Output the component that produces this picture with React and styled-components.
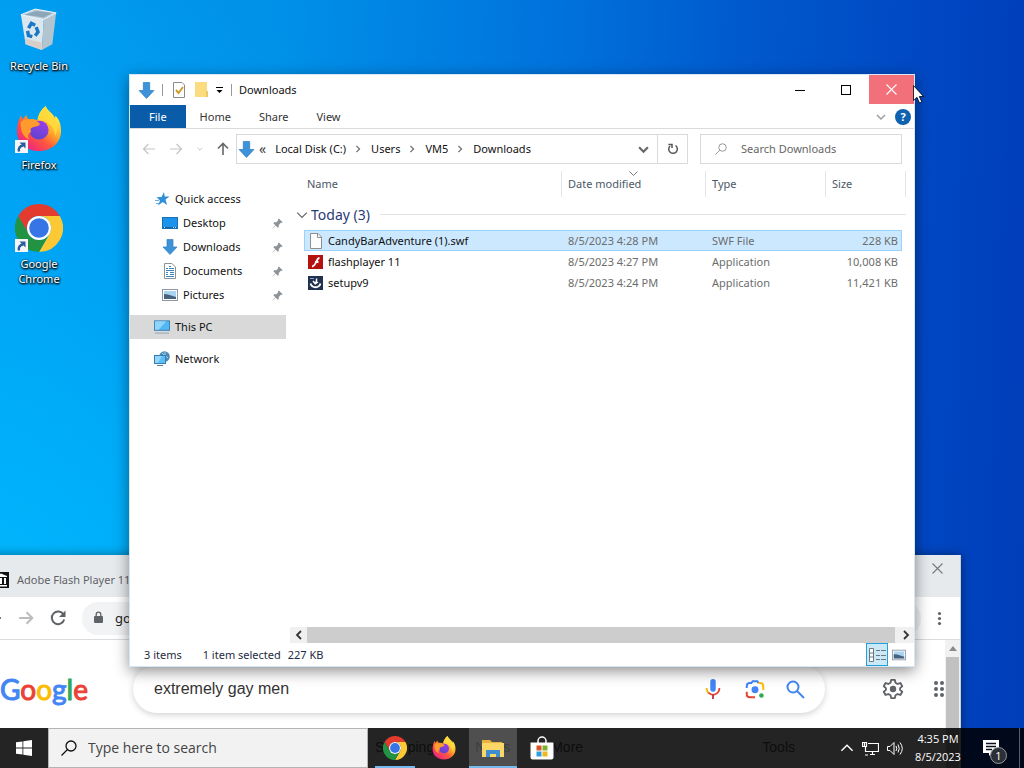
import React, { useId } from 'react';
import styled, { createGlobalStyle, css } from 'styled-components';

const GlobalStyle = createGlobalStyle`
  * { box-sizing: border-box; }
  body {
    margin: 0;
    overflow: hidden;
    font-family: "Noto Sans", "Open Sans", sans-serif;
    font-size: 11px;
    line-height: 16px;
    color: #111;
  }
  button, input {
    font: inherit;
    color: inherit;
    border: 0;
    padding: 0;
    margin: 0;
    background: none;
    outline: none;
  }
  svg { display: block; flex: none; }
`

/* ---------- desktop ---------- */

const Desktop = styled.div`
  position: relative;
  height: 100vh;
  overflow: hidden;
  background:
    radial-gradient(ellipse 60% 95% at 0% 88%, rgba(0, 190, 255, 0.9), rgba(0, 180, 255, 0.5) 50%, rgba(0, 170, 255, 0)),
    linear-gradient(92deg, #009cf0 0%, #008fe8 28%, #0074dc 52%, #0058cc 72%, #0046c2 90%, #003cb8 100%);
`

const Shortcuts = styled.nav`
  display: flex;
  flex-direction: column;
  width: 78px;
  padding-top: 6px;
`

const Shortcut = styled.button`
  display: flex;
  flex-direction: column;
  align-items: center;
  height: 99px;
  gap: 4px;
  color: #fff;
  line-height: 15px;
  text-shadow: 0 1px 2px #000, 1px 1px 2px #000, 0 0 2px rgba(0, 0, 0, 0.6);
`

const ShortcutIcon = styled.span`
  position: relative;
  display: grid;
  place-items: center;
  height: 48px;
  width: 48px;
`

const ShortcutArrow = styled.svg`
  position: absolute;
  left: 0;
  bottom: 0;
`

const ShortcutLabel = styled.span`
  width: 66px;
`

const Cursor = styled.svg`
  position: absolute;
  top: 85px;
  right: 100px;
`

/* ---------- explorer window ---------- */

const Explorer = styled.section`
  position: absolute;
  top: 74px;
  left: 129px;
  right: 109px;
  bottom: 101px;
  display: flex;
  flex-direction: column;
  background: #fff;
  border: 1px solid #d5e6f5;
  box-shadow: 0 4px 14px rgba(0, 0, 0, 0.45);
`

const TitleBar = styled.header`
  display: flex;
  align-items: center;
  height: 30px;
  padding-left: 8px;
`

const Divider = styled.span`
  width: 1px;
  height: 12px;
  background: #999;
`

const QuickTools = styled.div`
  display: flex;
  align-items: center;
  gap: 7px;
`

const IconButton = styled.button`
  display: grid;
  place-items: center;
`

const Title = styled.h1`
  flex: 1;
  margin: 0 0 0 7px;
  font-size: 11px;
  font-weight: 400;
`

const WindowButton = styled.button`
  display: grid;
  place-items: center;
  width: ${props => props.$close ? 45 : 46}px;
  height: 29px;
  align-self: flex-start;
  background: ${props => props.$close ? '#f1707a' : 'none'};
  color: ${props => props.$close ? '#fff' : '#000'};
`

const Ribbon = styled.nav`
  display: flex;
  align-items: center;
  height: 24px;
  border-bottom: 1px solid #dadbdc;
  padding-right: 3px;
`

const RibbonTab = styled.button`
  height: 23px;
  padding: 0 ${props => props.$file ? 19 : 14}px;
  color: ${props => props.$file ? '#fff' : '#333'};
  background: ${props => props.$file ? '#0a5ca8' : 'none'};
`

const Spacer = styled.span`
  flex: 1;
`

const Help = styled.button`
  width: 16px;
  height: 16px;
  margin-left: 9px;
  border-radius: 50%;
  background: #0f62b0;
  color: #fff;
  font-weight: 700;
`

const NavBar = styled.div`
  display: flex;
  align-items: center;
  height: 42px;
  padding: 0 12px 2px;
`

const NavButtons = styled.div`
  display: flex;
  align-items: center;
  justify-content: space-between;
  width: 88px;
  margin-right: 6px;
`

const AddressBar = styled.div`
  flex: 1;
  display: flex;
  align-items: center;
  height: 30px;
  border: 1px solid #d9d9d9;
  padding-left: 1px;
`

const Crumb = styled.button`
  margin-left: 9px;
  margin-right: 8px;
`

const CrumbOverflow = styled.button`
  margin-left: 4px;
  font-size: 14px;
  color: #444;
`

const Reload = styled.button`
  display: grid;
  place-items: center;
  width: 30px;
  height: 28px;
  margin-left: 8px;
  border-left: 1px solid #d9d9d9;
`

const SearchBox = styled.label`
  display: flex;
  align-items: center;
  width: 202px;
  height: 30px;
  margin-left: 12px;
  padding-left: 14px;
  gap: 14px;
  border: 1px solid #d9d9d9;

  input {
    flex: 1;
    min-width: 0;
  }
  input::placeholder {
    color: #666;
    opacity: 1;
  }
`

const Body = styled.div`
  flex: 1;
  display: flex;
  min-height: 0;
`

const Sidebar = styled.nav`
  display: flex;
  flex-direction: column;
  width: 156px;
  padding-top: 16px;
`

const SideItem = styled.button`
  display: flex;
  align-items: center;
  gap: 5px;
  height: 24px;
  padding-left: ${props => props.$nested ? 32 : 24}px;
  padding-right: 3px;
  margin-top: ${props => props.$spaced ? 8 : 0}px;
  background: ${props => props.$active ? '#d9d9d9' : 'none'};
  text-align: left;

  span { flex: 1; }
`

const Content = styled.main`
  flex: 1;
  min-width: 0;
  display: flex;
  flex-direction: column;
  padding-left: 4px;
`

const Files = styled.div`
  flex: 1;
  padding: 0 8px 0 14px;
`

const FileTable = styled.table`
  width: 100%;
  table-layout: fixed;
  border-collapse: separate;
  border-spacing: 0;

  th, td {
    padding: 0 4px 0 6px;
    text-align: left;
    font-weight: 400;
    white-space: nowrap;
  }
`

const Column = styled.th`
  position: relative;
  width: ${props => props.$width ? `${props.$width}px` : 'auto'};
  height: 26px;
  color: #4c5866;
  border-right: 1px solid ${props => props.$open ? 'transparent' : '#e5e5e5'};

  &:first-child { padding-left: 3px; }
`

const EdgeColumn = styled.td`
  width: 4px;
  border-right: 1px solid #e5e5e5;

  && { padding: 0; }
`

const SortMark = styled.svg`
  position: absolute;
  top: 0;
  left: 67px;
`

const GroupHeading = styled.button`
  display: flex;
  align-items: center;
  width: calc(100% + 8px);
  height: 33px;
  margin-left: -8px;
  padding-top: 2px;
  gap: 3px;
  font-size: 14px;
  line-height: 20px;
  color: #2b3a78;

  &::after {
    content: "";
    flex: 1;
    height: 1px;
    margin-left: 7px;
    background: #e2e2e2;
  }
`

const GroupCell = styled.td`
  && { padding: 0; }
`

const FileRow = styled.tr`
  td {
    height: 21px;
    color: #6d6d6d;
  }
  td:first-child {
    padding-left: 4px;
    color: #111;
  }
  td:nth-child(4) { text-align: right; }
  td:last-child { padding: 0; }

  ${props => props.$selected && css`
    td:not(:last-child) {
      background: #cce8ff;
      border-top: 1px solid #99d1ff;
      border-bottom: 1px solid #99d1ff;
    }
    td:first-child {
      border-left: 1px solid #99d1ff;
      padding-left: 3px;
    }
    td:nth-child(4) {
      border-right: 1px solid #99d1ff;
      padding-right: 3px;
    }
  `}
`

const FileName = styled.span`
  display: flex;
  align-items: center;
  gap: 4px;
`

const ScrollBar = styled.div`
  display: flex;
  height: 16px;
  background: #f0f0f0;
`

const ScrollButton = styled.button`
  display: grid;
  place-items: center;
  width: 17px;
`

const ScrollThumb = styled.span`
  flex: 1;
  margin-right: 2px;
  background: #cdcdcd;
`

const StatusBar = styled.footer`
  display: flex;
  align-items: center;
  height: 23px;
  padding: 0 4px 0 14px;
  color: #1e2a40;
`

const StatusText = styled.span`
  margin-right: ${props => props.$gap}px;
`

const ViewButton = styled.button`
  display: grid;
  place-items: center;
  width: 22px;
  height: 23px;
  border: 1px solid ${props => props.$active ? '#26a0da' : 'transparent'};
  background: ${props => props.$active ? '#cbe8f6' : 'none'};
`

/* ---------- browser window ---------- */

const Browser = styled.section`
  position: absolute;
  top: 555px;
  left: -40px;
  right: 63px;
  bottom: 0;
  display: flex;
  flex-direction: column;
  background: #fff;
  border-right: 1px solid #c9ccd1;
  box-shadow: 0 0 10px rgba(0, 0, 0, 0.4);
`

const TabStrip = styled.div`
  display: flex;
  align-items: center;
  height: 42px;
  padding: 8px 17px 0 33px;
  gap: 8px;
  background: #e7eaed;
  color: #5f6368;

  button:last-child { align-self: flex-start; }
`

const Toolbar = styled.div`
  display: flex;
  align-items: center;
  height: 43px;
  padding: 0 18px 0 26px;
  gap: 16px;
  border-bottom: 1px solid #dadce0;
`

const Omnibox = styled.label`
  flex: 1;
  display: flex;
  align-items: center;
  height: 33px;
  padding-left: 11px;
  gap: 11px;
  border-radius: 16px;
  background: #f1f3f4;
  color: #202124;
  font-size: 13px;

  input { flex: 1; }
`

const Page = styled.div`
  flex: 1;
  display: flex;
  min-height: 0;
`

const PageContent = styled.div`
  flex: 1;
  min-width: 0;
  overflow: hidden;
  font-family: "Liberation Sans", Arial, sans-serif;
`

const SearchHeader = styled.div`
  display: flex;
  align-items: center;
  height: 74px;
  padding: 24px 0 0 40px;
`

const Logo = styled.a`
  width: 133px;
  font-family: Lato, sans-serif;
  font-size: 28px;
  line-height: 40px;
  text-decoration: none;
  -webkit-text-stroke: 1px;
`

const LogoLetter = styled.span`
  color: ${props => props.$color};
`

const QueryBox = styled.form`
  flex: 1;
  display: flex;
  align-items: center;
  height: 48px;
  padding: 0 20px 0 21px;
  gap: 20px;
  border-radius: 24px;
  box-shadow: 0 2px 6px rgba(32, 33, 36, 0.2);
  color: #333;
  font-size: 16px;

  input {
    flex: 1;
    min-width: 0;
  }
`

const HeaderTools = styled.div`
  display: flex;
  align-items: center;
  justify-content: space-between;
  width: 63px;
  margin-left: 57px;
  overflow: hidden;
`

const Filters = styled.nav`
  display: flex;
  height: 68px;
  padding: 23px 150px 0 415px;
  gap: 41px;
  color: #5f6368;
  font-size: 14px;
  line-height: 20px;

  button { height: 20px; }
  button:last-child { margin-left: auto; }
`

const PageScroll = styled.div`
  width: 15px;
  padding: 0 1px;
  display: flex;
  flex-direction: column;
  align-items: center;
  background: #f1f1f1;

  svg { margin: 6px 0; }
`

const PageThumb = styled.span`
  flex: 1;
  align-self: stretch;
  background: #c1c1c1;
`

/* ---------- taskbar ---------- */

const Taskbar = styled.footer`
  position: absolute;
  left: 0;
  right: 0;
  bottom: 0;
  display: flex;
  height: 40px;
  background: rgba(0, 0, 0, 0.86);
  color: #fff;
  font-family: "Open Sans", "Noto Sans", sans-serif;
`

const StartButton = styled.button`
  display: grid;
  place-items: center;
  width: 48px;
`

const TaskSearch = styled.label`
  display: flex;
  align-items: center;
  width: 320px;
  margin-right: 3px;
  padding-left: 12px;
  gap: 11px;
  background: #f2f2f2;
  border: 1px solid #b4b4b4;
  color: #111;
  font-size: 14px;
  line-height: 20px;

  input { flex: 1; }
  input::placeholder {
    color: #444;
    opacity: 1;
  }
`

const TaskButton = styled.button`
  display: grid;
  place-items: center;
  width: 48px;
  margin-right: 1px;
  background:
    linear-gradient(#76b9ed, #76b9ed) bottom / ${props => props.$active ? '100%' : props.$running ? '40px' : '0'} 2px no-repeat,
    ${props => props.$active ? 'rgba(255, 255, 255, 0.2)' : 'transparent'};
`

const Tray = styled.div`
  display: flex;
  align-items: center;
  gap: 8px;
  margin-left: auto;
`

const Clock = styled.time`
  width: 52px;
  text-align: center;
  line-height: 18px;
`

const ActionCenter = styled.button`
  position: relative;
  display: grid;
  place-items: center;
  width: 48px;
  height: 40px;
  padding-right: 10px;
  border-right: 1px solid #55606e;
  margin-right: 4px;
`

const Badge = styled.span`
  position: absolute;
  left: 18px;
  top: 19px;
  width: 17px;
  height: 17px;
  border: 1px solid #999;
  border-radius: 50%;
  background: #2b2f38;
  line-height: 15px;
`

/* ---------- drawings ---------- */

const ChromeIcon = ({ size }) => (
  <svg width={size} height={size} viewBox="0 0 48 48">
    <path fill="#e33b2e" d="M24 12H44.8A24 24 0 0 0 3.2 12L13.6 30A12 12 0 0 1 24 12Z" />
    <path fill="#fcc934" d="M24 12H44.8A24 24 0 0 1 24 48L34.4 30A12 12 0 0 0 24 12Z" />
    <path fill="#229342" d="M3.2 12L13.6 30A12 12 0 0 0 34.4 30L24 48A24 24 0 0 1 3.2 12Z" />
    <circle cx="24" cy="24" r="12" fill="#fff" />
    <circle cx="24" cy="24" r="9.8" fill="#3575e6" />
  </svg>
)

const FirefoxIcon = ({ size }) => {
  const id = useId()
  return (
    <svg width={size} height={size} viewBox="0 0 48 48">
      <defs>
        <linearGradient id={`${id}f`} x1="0.85" y1="0.1" x2="0.2" y2="0.9">
          <stop offset="0.1" stopColor="#ffe846" />
          <stop offset="0.4" stopColor="#ffa92a" />
          <stop offset="0.65" stopColor="#ff5a3c" />
          <stop offset="1" stopColor="#f0267c" />
        </linearGradient>
        <linearGradient id={`${id}p`} x1="0.8" y1="0" x2="0.3" y2="1">
          <stop offset="0" stopColor="#a13bea" />
          <stop offset="1" stopColor="#5a46cf" />
        </linearGradient>
      </defs>
      <path
        fill={`url(#${id}f)`}
        d="M31 0c1 4 5 6 8 10 1 2 1 3 1 4 1-1 1-2 1-4 4 4 6 9 6 16 0 12-10 21-23 21S1 38 1 26c0-5 1-10 4-16l2 4c1-2 2-3 4-5 0 3 1 4 3 5 3-1 6 0 8 1 1-6 4-11 9-15Z"
      />
      <circle cx="24" cy="25" r="10" fill={`url(#${id}p)`} />
      <path fill="#ff9a2c" d="M5 17c3-3 6-4 9-3 4 0 9 1 11 5-2 3-6 2-9 4-1 1-1 3 0 4-4 1-4 5-2 8-6-2-10-9-9-18Z" />
      <path fill="#ffdb3c" d="M31 0c1 4 5 6 8 10 5 6 6 14 2 21-1-6-3-11-9-14-3-2-6-2-9-2 0-6 3-11 8-15Z" opacity="0.85" />
    </svg>
  )
}

const RecycleIcon = () => (
  <svg width="40" height="44" viewBox="0 0 42 46">
    <path fill="#b9cbd8" d="M2 7L17 1L39 5L26 12Z" />
    <path fill="#8ba6b8" d="M6 7L18 3L35 5L26 10Z" />
    <path fill="#dce6ed" d="M2 7L26 12L24 44L7 38Z" />
    <path fill="#b3c4d1" d="M26 12L39 5L35 38L24 44Z" />
    <path fill="#d8cfcb" d="M6 32L24 36L24 44L7 38Z" />
    <path fill="none" stroke="#eff7fb" d="M2 7L17 1L39 5L26 12Z" />
    <g fill="none" stroke="#1977c8" strokeWidth="3.6">
      <path d="M10 21l3-5 4 2" />
      <path d="M18 20l2 5-3 4" />
      <path d="M14 30l-4-1-1-5" />
    </g>
  </svg>
)

const Down = ({ size = 16 }) => (
  <svg width={size} height={size} viewBox="0 0 16 16">
    <path fill="#3d92d8" stroke="#2f7fc6" strokeWidth="0.7" d="M5 0.500H11V8H15L8 15.500L1 8H5Z" />
  </svg>
)

const Chevron = ({ dir = 'down', size = 8, color = '#666', stroke = 1.4 }) => {
  const points = {
    down: '1,3 5,7 9,3',
    up: '1,7 5,3 9,7',
    left: '7,1 3,5 7,9',
    right: '3,1 7,5 3,9',
  }
  return (
    <svg width={size} height={size} viewBox="0 0 10 10" fill="none" stroke={color} strokeWidth={stroke}>
      <polyline points={points[dir]} />
    </svg>
  )
}

const Arrow = ({ angle = 0, size = 14, color, stroke = 1.2 }) => (
  <svg width={size} height={size} viewBox="0 0 14 14" fill="none" stroke={color} strokeWidth={stroke}>
    <path transform={`rotate(${angle} 7 7)`} d="M13 7H1.500M6.500 2L1.500 7L6.500 12" />
  </svg>
)

const Cross = ({ size = 11, color = '#fff' }) => (
  <svg width={size} height={size} viewBox="0 0 11 11" stroke={color} strokeWidth="1.100">
    <path d="M0.500 0.500L10.500 10.500M10.500 0.500L0.500 10.500" />
  </svg>
)

const Magnifier = ({ size = 14, color = '#777', stroke = 1 }) => (
  <svg width={size} height={size} viewBox="0 0 16 16" fill="none" stroke={color} strokeWidth={stroke}>
    <circle cx="10" cy="6" r="5" />
    <path d="M6.500 9.500L0.500 15.500" />
  </svg>
)

const Pin = () => (
  <svg width="11" height="11" viewBox="0 0 12 12">
    <path fill="#8d9298" d="M7.500 0.500L11.500 4.500L10.500 5.500L9.500 5.200L7.500 7.500L7.300 9.800L6.300 10.600L4 8.200L0.800 11.500L0.500 11.200L3.600 7.800L1.500 5.600L2.300 4.700L4.700 4.500L6.800 2.500L6.500 1.500Z" />
  </svg>
)

const Star = () => (
  <svg width="16" height="16" viewBox="0 0 16 16">
    <path fill="#2f8fd8" d="M10 1L10.700 5.500L15.500 5.500L11.500 8.600L13 14L8.800 11L4 14.500L6 9.500L2.500 6.200L7.500 6Z" />
    <path stroke="#6bb0e4" d="M1 9.500H5M2 12.500H5" />
  </svg>
)

const DesktopIcon = () => (
  <svg width="16" height="16" viewBox="0 0 16 16">
    <rect x="0.500" y="2.500" width="15" height="11" fill="#1b93ec" stroke="#1570b5" />
    <path stroke="#0d5fa0" d="M1 12.500H15" />
    <path stroke="#bfe0fa" d="M2 12.500H4M11 12.500H14" strokeDasharray="1 1" />
  </svg>
)

const DocumentIcon = () => (
  <svg width="16" height="16" viewBox="0 0 16 16">
    <path fill="#fff" stroke="#8a9299" d="M2.500 0.500H10L13.500 4V15.500H2.500Z" />
    <path stroke="#3c85bd" d="M7 3.500H9M4 5.500H6M7 5.500H12M4 7.500H12M4 9.500H6M8 9.500H12M4 11.500H6M8 11.500H12M4 13.500H12" />
  </svg>
)

const PictureIcon = ({ width = 16 }) => (
  <svg width={width} height={width} viewBox="0 0 16 16">
    <rect x="0.500" y="2.500" width="15" height="11" fill="#fff" stroke="#8c98a5" />
    <rect x="2" y="4" width="12" height="8" fill="#a9d4f2" />
    <path fill="#46627d" d="M2 7L6 7.500L14 10V12H2Z" />
  </svg>
)

const PcIcon = () => (
  <svg width="16" height="16" viewBox="0 0 17 16">
    <rect x="0.500" y="1.500" width="16" height="10" fill="#52b7f2" stroke="#3d7fae" />
    <path fill="#8fd4fa" d="M1 2H13L5 11H1Z" />
    <path stroke="#8ba3b5" d="M1 14.500H16" />
  </svg>
)

const NetworkIcon = () => (
  <svg width="16" height="16" viewBox="0 0 16 16">
    <circle cx="10.500" cy="5.500" r="5.300" fill="#4a8ab5" />
    <path stroke="#a9d1e8" d="M8 2L14 7M11 1V6" />
    <rect x="0.500" y="4.500" width="11" height="8" fill="#5cbef5" stroke="#337fb3" />
    <path fill="#93d6fa" d="M1 5H8L4 12H1Z" />
    <path stroke="#4d7c9c" d="M3 14.500H9" />
  </svg>
)

const PageIcon = () => (
  <svg width="16" height="16" viewBox="0 0 16 16">
    <path fill="#fcfcfc" stroke="#8e8e8e" d="M2.500 0.500H10L13.500 4V15.500H2.500Z" />
    <path fill="none" stroke="#8e8e8e" d="M9.500 0.500V4.500H13.500" />
  </svg>
)

const FlashIcon = () => (
  <svg width="16" height="16" viewBox="0 0 16 16">
    <rect width="15" height="14" y="1" fill="#b3120f" />
    <path fill="none" stroke="#fff" strokeWidth="1.900" d="M11.500 4C8 4 8.500 12 4 12.500M7 8H10.500" />
  </svg>
)

const SetupIcon = () => (
  <svg width="16" height="16" viewBox="0 0 16 16">
    <rect width="15" height="14" y="1" fill="#20304e" />
    <path fill="none" stroke="#fff" strokeWidth="1.800" d="M2.500 8.500C4 13.500 11 13.500 12.500 8.500" />
    <path fill="none" stroke="#fff" strokeWidth="1.500" d="M8.500 3.500Q9 6 7.500 8M5 6L7.300 8.800L10 7" />
    <path stroke="#7ba4cf" d="M2 3.500H6" />
  </svg>
)

const MicIcon = () => (
  <svg width="22" height="22" viewBox="0 0 24 24">
    <rect x="9" y="1" width="6" height="14" rx="3" fill="#4285f4" />
    <path fill="none" stroke="#f6b704" strokeWidth="2" d="M5 11C5 13.500 6 15.500 7.500 16.500" />
    <path fill="none" stroke="#ea4335" strokeWidth="2" d="M7 16C10 19 14 19 17 16.200C18.500 15 19 13 19 11" />
    <path stroke="#b33d32" strokeWidth="2" d="M12 18V23" />
  </svg>
)

const LensIcon = () => (
  <svg width="22" height="22" viewBox="0 0 24 24" fill="none" strokeWidth="2.200">
    <path stroke="#4285f4" d="M3 11V9C3 7 4.500 5.500 6.500 5.500H8L9.500 3.500H14.500L16 5.500" />
    <path stroke="#fbbc04" d="M16 5.500H17.500C19.500 5.500 21 7 21 9V13" />
    <path stroke="#ea4335" d="M3 15V18C3 20 4.500 21 6.500 21H12" />
    <circle cx="12" cy="12.800" r="3.800" fill="#4285f4" />
    <circle cx="19" cy="19" r="2.500" fill="#34a853" />
  </svg>
)

const SearchGlyph = () => (
  <svg width="19" height="19" viewBox="0 0 19 19" fill="none" stroke="#4285f4" strokeWidth="2">
    <circle cx="7" cy="7" r="5.500" />
    <path d="M11 11L18 18" />
  </svg>
)

const GearIcon = () => (
  <svg width="22" height="22" viewBox="0 0 24 24" fill="none" stroke="#5f6368" strokeWidth="2">
    <path strokeLinejoin="round" d="M10 2H14L14.700 5.200L17 6.500L20.100 5.500L22.100 9L19.700 11V13L22.100 15L20.100 18.500L17 17.500L14.700 18.800L14 22H10L9.300 18.800L7 17.500L3.900 18.500L1.900 15L4.300 13V11L1.900 9L3.900 5.500L7 6.500L9.300 5.200Z" />
    <circle cx="12" cy="12" r="3.500" fill="#5f6368" stroke="none" />
  </svg>
)

const Dots = ({ columns, rows = 3, step = 6, r = 2 }) => (
  <svg width={columns * step} height={rows * step} fill="#5f6368">
    {Array.from({ length: columns * rows }, (_, i) => (
      <circle key={i} cx={(i % columns) * step + step / 2} cy={Math.floor(i / columns) * step + step / 2} r={r} />
    ))}
  </svg>
)

/* ---------- data ---------- */

const files = [
  { name: 'CandyBarAdventure (1).swf', date: '8/5/2023 4:28 PM', type: 'SWF File', size: '228 KB', icon: <PageIcon />, selected: true },
  { name: 'flashplayer 11', date: '8/5/2023 4:27 PM', type: 'Application', size: '10,008 KB', icon: <FlashIcon /> },
  { name: 'setupv9', date: '8/5/2023 4:24 PM', type: 'Application', size: '11,421 KB', icon: <SetupIcon /> },
]

const pinned = [
  { name: 'Desktop', icon: <DesktopIcon /> },
  { name: 'Downloads', icon: <Down /> },
  { name: 'Documents', icon: <DocumentIcon /> },
  { name: 'Pictures', icon: <PictureIcon /> },
]

const shortcuts = [
  { name: 'Recycle Bin', icon: <RecycleIcon /> },
  { name: 'Firefox', icon: <FirefoxIcon size={46} />, linked: true },
  { name: 'Google Chrome', icon: <ChromeIcon size={48} />, linked: true },
]

const logo = [['G', '#4285f4'], ['o', '#ea4335'], ['o', '#fbbc05'], ['g', '#4285f4'], ['l', '#34a853'], ['e', '#ea4335']]

/* ---------- parts ---------- */

const DesktopShortcuts = () => (
  <Shortcuts>
    {shortcuts.map(item => (
      <Shortcut key={item.name}>
        <ShortcutIcon>
          {item.icon}
          {item.linked && (
            <ShortcutArrow width="13" height="13" viewBox="0 0 13 13">
              <rect width="13" height="13" fill="#f4f6f8" />
              <path fill="none" stroke="#2a5b9c" strokeWidth="2.500" d="M4 11.500C3 8 5 6 8 5.500" />
              <path fill="#2a5b9c" d="M4.500 2.500H10.500V8.500Z" />
            </ShortcutArrow>
          )}
        </ShortcutIcon>
        <ShortcutLabel>{item.name}</ShortcutLabel>
      </Shortcut>
    ))}
  </Shortcuts>
)

const BrowserWindow = () => (
  <Browser>
    <TabStrip>
      <svg width="16" height="16" viewBox="0 0 16 16">
        <rect width="16" height="16" fill="#111" />
        <path fill="#fff" d="M2 4L8 1.500L14 4V5H2ZM3 6H5V12H3ZM7 6H9V12H7ZM11 6H13V12H11ZM2 13H14V14.500H2Z" />
      </svg>
      <span>Adobe Flash Player 11</span>
      <Spacer />
      <IconButton aria-label="Close browser"><Cross color="#777" /></IconButton>
    </TabStrip>
    <Toolbar>
      <IconButton aria-label="Back"><Arrow size={16} color="#5f6368" stroke={1.8} /></IconButton>
      <IconButton aria-label="Forward"><Arrow angle={180} size={16} color="#babcbe" stroke={1.8} /></IconButton>
      <IconButton aria-label="Reload page">
        <svg width="16" height="16" viewBox="0 0 16 16" fill="none" stroke="#5f6368" strokeWidth="2">
          <path d="M13.500 4.500A6.300 6.300 0 1 0 14.200 9.500" />
          <path fill="#5f6368" stroke="none" d="M15.500 0.500V7H9Z" />
        </svg>
      </IconButton>
      <Omnibox>
        <svg width="11" height="14" viewBox="0 0 11 14">
          <rect x="1" y="5" width="9" height="7" rx="1" fill="#5f6368" />
          <path fill="none" stroke="#5f6368" strokeWidth="1.300" d="M3.200 6V3.500A2.300 2.300 0 0 1 7.800 3.500V6" />
        </svg>
        <input aria-label="Address" defaultValue="google.com" />
      </Omnibox>
      <IconButton aria-label="Browser menu"><Dots columns={1} step={5} r={1.6} /></IconButton>
    </Toolbar>
    <Page>
      <PageContent>
        <SearchHeader>
          <Logo href="#" aria-label="Google">
            {logo.map(([letter, color], i) => <LogoLetter key={i} $color={color}>{letter}</LogoLetter>)}
          </Logo>
          <QueryBox>
            <input aria-label="Search query" defaultValue="extremely gay men" />
            <IconButton type="button" aria-label="Voice search"><MicIcon /></IconButton>
            <IconButton type="button" aria-label="Image search"><LensIcon /></IconButton>
            <IconButton type="button" aria-label="Search"><SearchGlyph /></IconButton>
          </QueryBox>
          <HeaderTools>
            <IconButton aria-label="Settings"><GearIcon /></IconButton>
            <IconButton aria-label="Apps"><Dots columns={2} /></IconButton>
          </HeaderTools>
        </SearchHeader>
        <Filters>
          <button>Shopping</button>
          <button>News</button>
          <button>More</button>
          <button>Tools</button>
        </Filters>
      </PageContent>
      <PageScroll>
        <svg width="8" height="5" viewBox="0 0 8 5"><path fill="#8a8a8a" d="M0 5L4 0L8 5Z" /></svg>
        <PageThumb />
      </PageScroll>
    </Page>
  </Browser>
)

const FileList = () => (
  <FileTable>
    <thead>
      <tr>
        <Column>Name</Column>
        <Column $width={144}>
          Date modified
          <SortMark width="9" height="5" viewBox="0 0 9 5" fill="none" stroke="#777">
            <path d="M0.500 0.500L4.500 4.500L8.500 0.500" />
          </SortMark>
        </Column>
        <Column $width={120}>Type</Column>
        <Column $width={76} $open>Size</Column>
        <EdgeColumn />
      </tr>
    </thead>
    <tbody>
      <tr>
        <GroupCell colSpan={5}>
          <GroupHeading><Chevron size={12} stroke={1} />Today (3)</GroupHeading>
        </GroupCell>
      </tr>
      {files.map(file => (
        <FileRow key={file.name} $selected={file.selected}>
          <td><FileName>{file.icon}{file.name}</FileName></td>
          <td>{file.date}</td>
          <td>{file.type}</td>
          <td>{file.size}</td>
          <td />
        </FileRow>
      ))}
    </tbody>
  </FileTable>
)

const ExplorerWindow = () => (
  <Explorer>
    <TitleBar>
      <QuickTools>
        <Down size={17} />
        <Divider />
        <IconButton aria-label="Properties">
          <svg width="18" height="16" viewBox="0 0 18 16">
            <path fill="#fff" stroke="#8b8b8b" d="M3.500 0.500H12L14.500 3V15.500H3.500Z" />
            <path fill="none" stroke="#d39a2c" strokeWidth="2" d="M6 8L8.500 11L13 5" />
          </svg>
        </IconButton>
        <IconButton aria-label="New folder">
          <svg width="14" height="16" viewBox="0 0 14 16">
            <path fill="#fbdc7e" d="M0 0H12V9H13V15H0Z" />
            <path fill="#eec663" d="M11 9H13V15H11Z" />
          </svg>
        </IconButton>
        <IconButton aria-label="Customize toolbar">
          <svg width="8" height="8" viewBox="0 0 8 8">
            <path d="M0 1H7V2H0ZM0.500 4H6.500L3.500 7Z" />
          </svg>
        </IconButton>
        <Divider />
      </QuickTools>
      <Title>Downloads</Title>
      <WindowButton aria-label="Minimize"><svg width="10" height="10" stroke="#000"><path d="M0 5.500H10" /></svg></WindowButton>
      <WindowButton aria-label="Maximize"><svg width="10" height="10" stroke="#000" fill="none"><rect x="0.500" y="0.500" width="9" height="9" /></svg></WindowButton>
      <WindowButton $close aria-label="Close"><Cross /></WindowButton>
    </TitleBar>
    <Ribbon>
      <RibbonTab $file>File</RibbonTab>
      <RibbonTab>Home</RibbonTab>
      <RibbonTab>Share</RibbonTab>
      <RibbonTab>View</RibbonTab>
      <Spacer />
      <IconButton aria-label="Expand ribbon"><Chevron size={10} color="#999" /></IconButton>
      <Help aria-label="Help">?</Help>
    </Ribbon>
    <NavBar>
      <NavButtons>
        <IconButton aria-label="Back"><Arrow color="#c4c4c4" /></IconButton>
        <IconButton aria-label="Forward"><Arrow angle={180} color="#c4c4c4" /></IconButton>
        <IconButton aria-label="Recent"><Chevron size={6} color="#bbb" /></IconButton>
        <IconButton aria-label="Up"><Arrow angle={90} color="#666" stroke={1.6} /></IconButton>
      </NavButtons>
      <AddressBar>
        <Down size={17} />
        <CrumbOverflow aria-label="More locations">«</CrumbOverflow>
        <Crumb>Local Disk (C:)</Crumb>
        <Chevron dir="right" />
        <Crumb>Users</Crumb>
        <Chevron dir="right" />
        <Crumb>VM5</Crumb>
        <Chevron dir="right" />
        <Crumb>Downloads</Crumb>
        <Spacer />
        <IconButton aria-label="Previous locations"><Chevron size={11} stroke={2} /></IconButton>
        <Reload aria-label="Refresh">
          <svg width="12" height="12" viewBox="0 0 12 12" fill="none" stroke="#555" strokeWidth="1.500">
            <path d="M3 3A4.300 4.300 0 1 0 8.500 2.500" />
            <path d="M1.500 1.500H5V5" />
          </svg>
        </Reload>
      </AddressBar>
      <SearchBox>
        <Magnifier size={12} />
        <input aria-label="Search Downloads" placeholder="Search Downloads" />
      </SearchBox>
    </NavBar>
    <Body>
      <Sidebar>
        <SideItem><Star /><span>Quick access</span></SideItem>
        {pinned.map(item => (
          <SideItem key={item.name} $nested>{item.icon}<span>{item.name}</span><Pin /></SideItem>
        ))}
        <SideItem $spaced $active><PcIcon /><span>This PC</span></SideItem>
        <SideItem $spaced><NetworkIcon /><span>Network</span></SideItem>
      </Sidebar>
      <Content>
        <Files><FileList /></Files>
        <ScrollBar>
          <ScrollButton aria-label="Scroll left"><Chevron dir="left" size={10} color="#333" stroke={1.8} /></ScrollButton>
          <ScrollThumb />
          <ScrollButton aria-label="Scroll right"><Chevron dir="right" size={10} color="#333" stroke={1.8} /></ScrollButton>
        </ScrollBar>
      </Content>
    </Body>
    <StatusBar>
      <StatusText $gap={21}>3 items</StatusText>
      <StatusText $gap={7}>1 item selected</StatusText>
      <StatusText $gap={0}>227 KB</StatusText>
      <Spacer />
      <ViewButton $active aria-label="Details view">
        <svg width="17" height="14" viewBox="0 0 17 14" fill="#fff" stroke="#6c7880">
          <path d="M0.500 0.500H4.500V13.500H0.500ZM0.500 5H4.500M0.500 9H4.500" />
          <path d="M7 2.500H11M12 2.500H17M7 7.500H11M12 7.500H17M7 11.500H11M12 11.500H17" />
        </svg>
      </ViewButton>
      <ViewButton aria-label="Icon view"><PictureIcon width={14} /></ViewButton>
    </StatusBar>
  </Explorer>
)

const SystemTaskbar = () => (
  <Taskbar>
    <StartButton aria-label="Start">
      <svg width="16" height="16" viewBox="0 0 16 16" fill="#fff">
        <path d="M0 2.300L6.500 1.400V7.600H0ZM7.300 1.300L16 0V7.600H7.300ZM0 8.400H6.500V14.600L0 13.700ZM7.300 8.400H16V16L7.300 14.700Z" />
      </svg>
    </StartButton>
    <TaskSearch>
      <Magnifier size={16} color="#111" stroke={1.3} />
      <input aria-label="Type here to search" placeholder="Type here to search" />
    </TaskSearch>
    <TaskButton $running aria-label="Chrome"><ChromeIcon size={24} /></TaskButton>
    <TaskButton aria-label="Firefox"><FirefoxIcon size={24} /></TaskButton>
    <TaskButton $active aria-label="File Explorer">
      <svg width="22" height="19" viewBox="0 0 22 19">
        <path fill="#e8b23c" d="M0 1H8L10 3H20V6H0Z" />
        <path fill="#fbd768" d="M0 4H22V18H0Z" />
        <path fill="#3f8fd0" d="M4 11H18V18H14V15H8V18H4Z" />
      </svg>
    </TaskButton>
    <TaskButton aria-label="Store">
      <svg width="24" height="24" viewBox="0 0 24 24">
        <path fill="none" stroke="#fff" strokeWidth="1.500" d="M8 7V5A4 4 0 0 1 16 5V7" />
        <path fill="#fff" d="M0.500 6.500H23.500V21.500Q23.500 23.500 21.500 23.500H2.500Q0.500 23.500 0.500 21.500Z" />
        <path fill="#d8522b" d="M6.500 9.500H11.500V14.500H6.500Z" />
        <path fill="#7bb42c" d="M12.500 9.500H17.500V14.500H12.500Z" />
        <path fill="#2a9fe0" d="M6.500 15.500H11.500V20.500H6.500Z" />
        <path fill="#f5b51e" d="M12.500 15.500H17.500V20.500H12.500Z" />
      </svg>
    </TaskButton>
    <Tray>
      <IconButton aria-label="Hidden icons"><Chevron dir="up" size={14} color="#fff" stroke={1} /></IconButton>
      <IconButton aria-label="Network status">
        <svg width="17" height="15" viewBox="0 0 17 15" fill="none" stroke="#fff" strokeWidth="1.200">
          <path d="M6 2.500H16.500V10.500H3.500V6M8 13.500H13M10.500 11V13.500M3 14H6" />
          <path d="M0.500 1.500H4.500V5.500H0.500ZM2.500 1.500V5.500" />
        </svg>
      </IconButton>
      <IconButton aria-label="Volume">
        <svg width="17" height="15" viewBox="0 0 17 15" fill="none" stroke="#fff">
          <path d="M0.500 5.500H3L7 1.500V13.500L3 9.500H0.500Z" />
          <path d="M9 5Q10.500 7.500 9 10M11 3.500Q13.500 7.500 11 11.500M13 1.500Q17.500 7.500 13 13.500" />
        </svg>
      </IconButton>
      <Clock>4:35 PM<br />8/5/2023</Clock>
      <ActionCenter aria-label="Notifications">
        <svg width="16" height="16" viewBox="0 0 16 16">
          <path fill="#fff" d="M0 0H16V13H9L6 16V13H0Z" />
          <path stroke="#0a1020" strokeWidth="1.300" d="M3 3.500H13M3 6.500H13M3 9.500H9" />
        </svg>
        <Badge>1</Badge>
      </ActionCenter>
    </Tray>
  </Taskbar>
)

const App = () => (
  <>
    <GlobalStyle />
    <Desktop>
      <DesktopShortcuts />
      <BrowserWindow />
      <ExplorerWindow />
      <SystemTaskbar />
      <Cursor width="11" height="19" viewBox="0 0 11 19">
        <path fill="#fff" stroke="#000" strokeWidth="0.800" d="M0.500 0.500V15.500L4 12.300L6.500 18L8.800 17L6.300 11.500H10.500Z" />
      </Cursor>
    </Desktop>
  </>
)

export default App;
